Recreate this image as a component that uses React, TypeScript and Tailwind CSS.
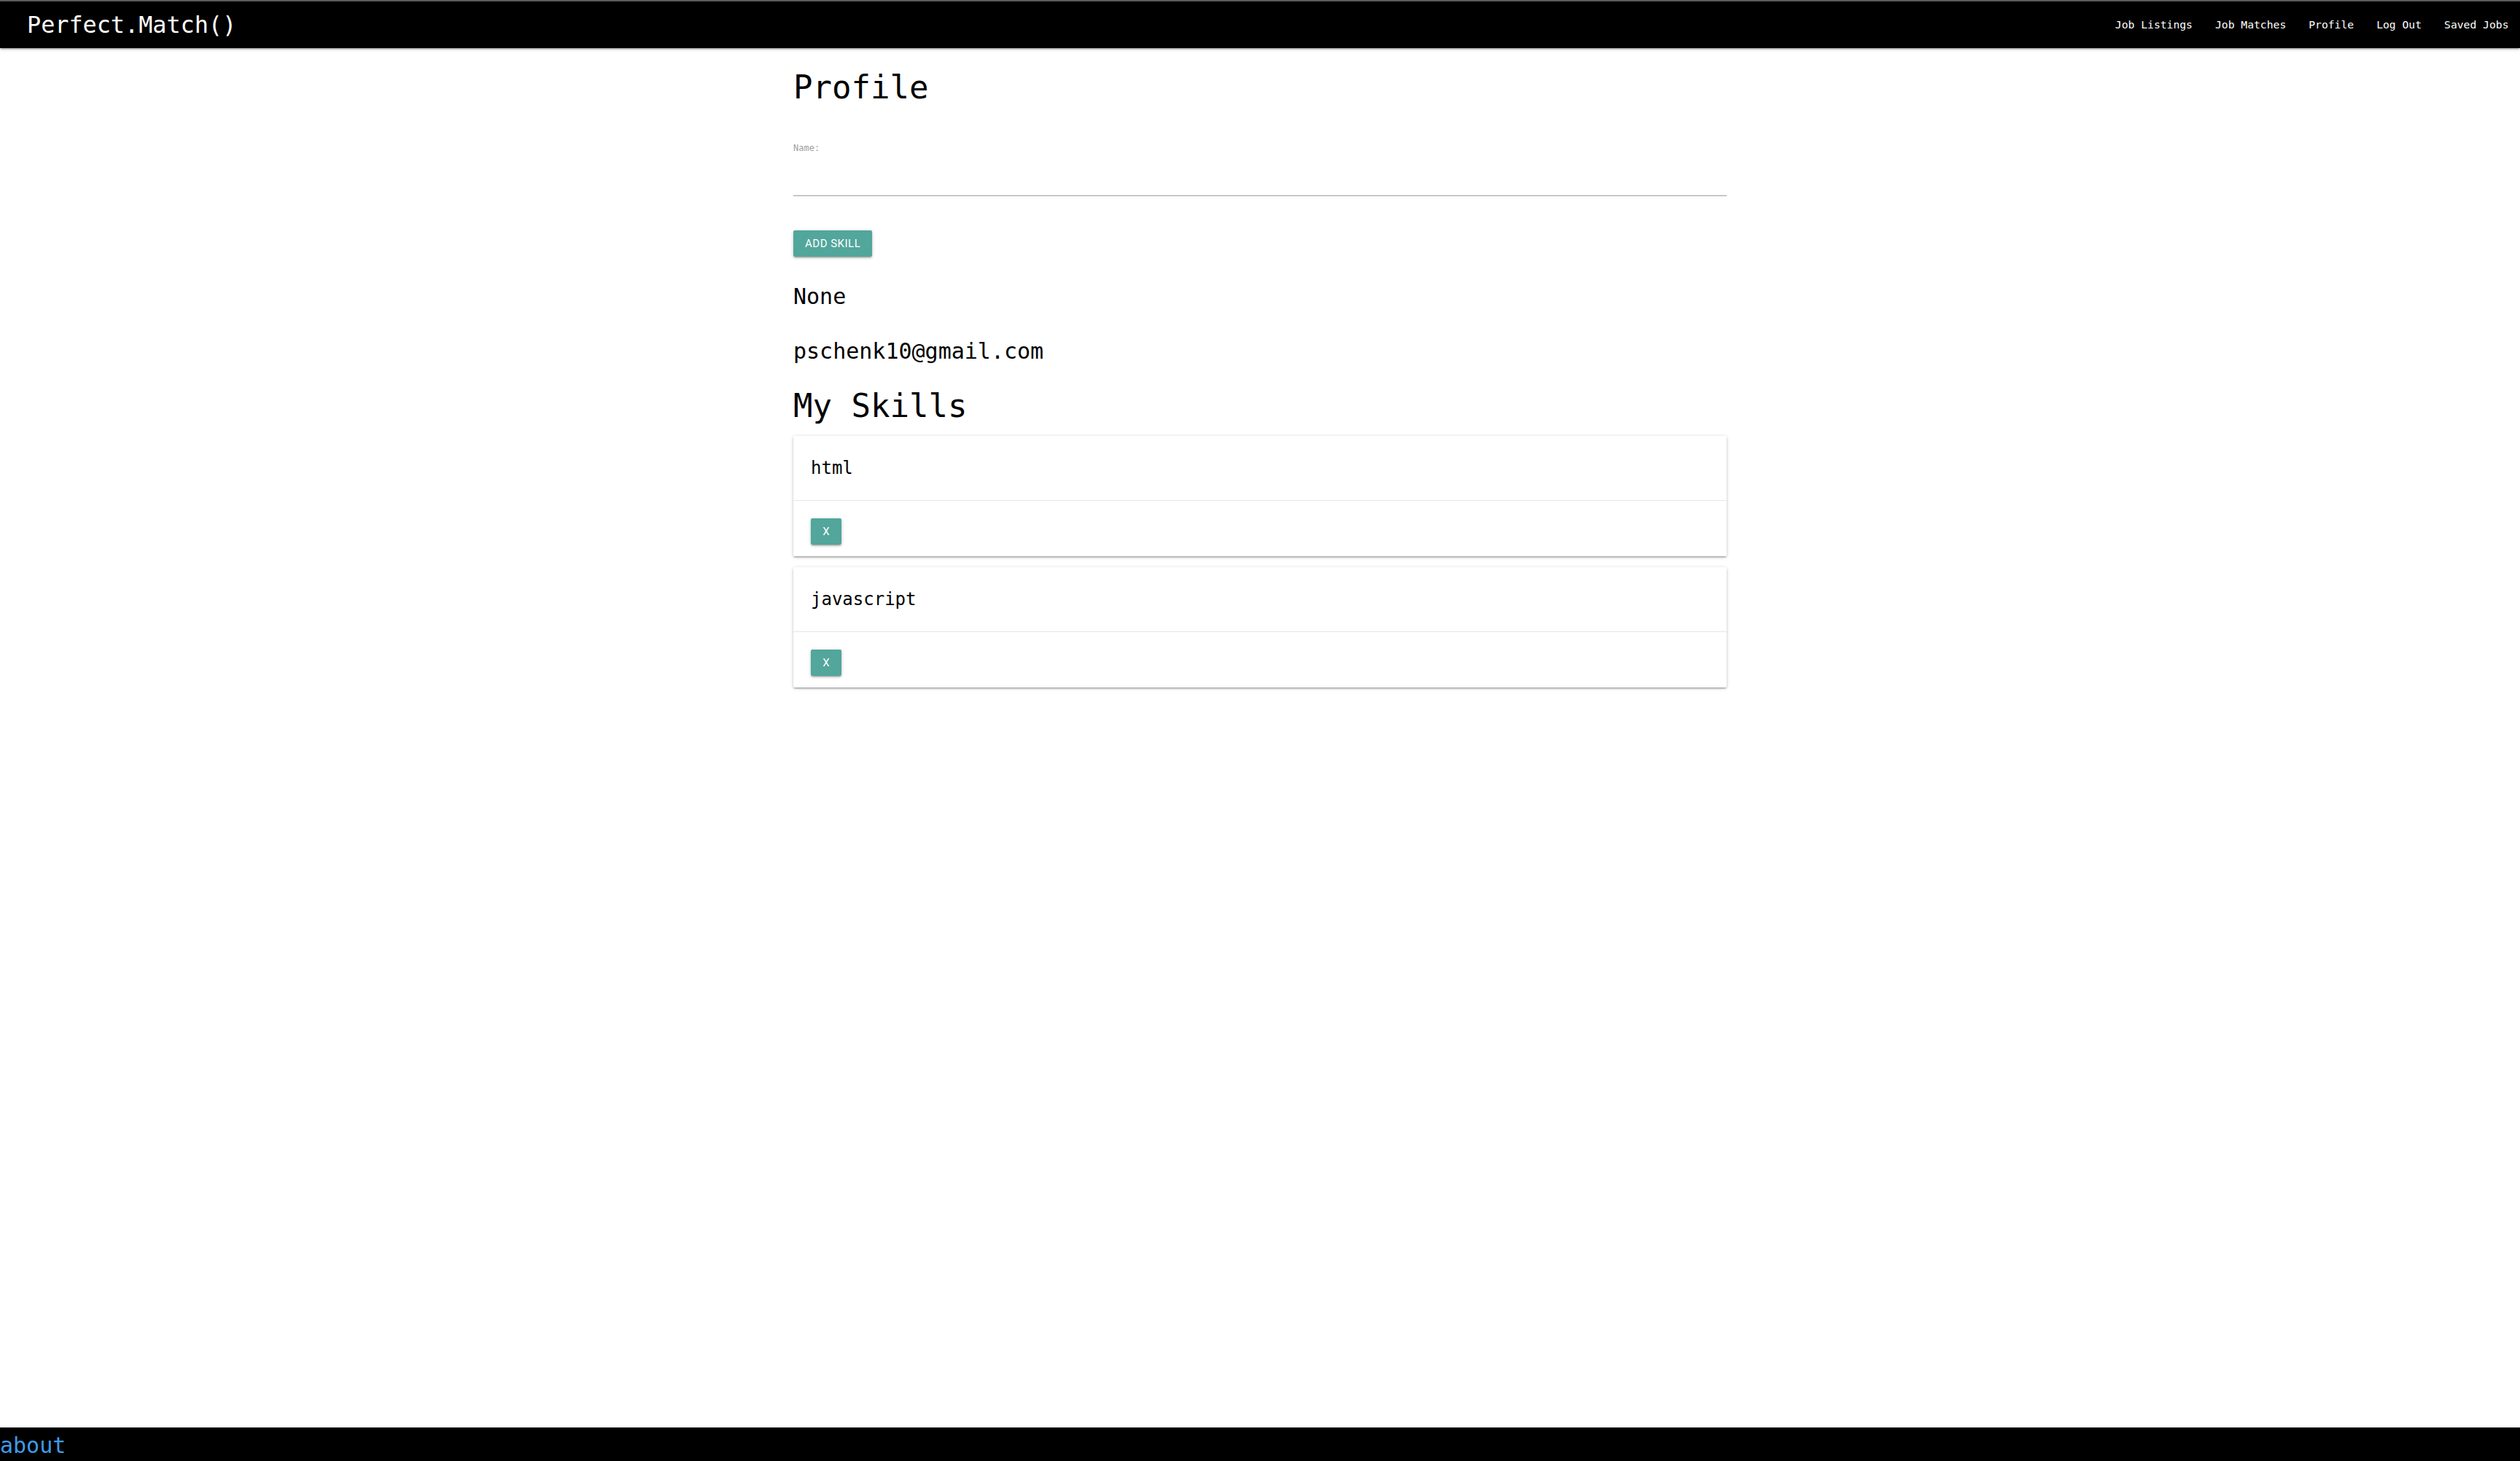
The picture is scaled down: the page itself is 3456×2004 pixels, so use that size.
import { useState } from "react"

const mono = "font-['DejaVu_Sans_Mono','Liberation_Mono',monospace]"
const sans = "font-['Roboto','Liberation_Sans',sans-serif]"
const shadow = "shadow-[0_2px_2px_0_rgba(0,0,0,0.14),0_3px_1px_-2px_rgba(0,0,0,0.12),0_1px_5px_0_rgba(0,0,0,0.2)]"

const links = ["Job Listings", "Job Matches", "Profile", "Log Out", "Saved Jobs"]

export default function App() {

  const [name, setName] = useState("")
  const [skills, setSkills] = useState(["html", "javascript"])

  const removeSkill = (i:number) => {
    const next=[...skills]
    next.splice(i,1)
    setSkills(next)
  }

  return(

    <div className={`min-h-screen flex flex-col bg-white text-black ${mono}`}>

      <nav className={`h-[66px] bg-black border-t-2 border-[#5b5b5b] flex items-center justify-between relative z-10 ${shadow}`}>
        <a className="pl-[37px] text-white text-[31.8px] leading-none">
          Perfect.Match()
        </a>
        <ul className="flex">
          {links.map((l)=>(
            <li key={l}>
              <a className="px-[15.5px] text-white text-[14.7px]">{l}</a>
            </li>
          ))}
        </ul>
      </nav>

      <main className="flex-1">
        <div className="w-[1280px] mx-auto">

          <h1 className="mt-[30px] text-[44px] leading-[47px]">Profile</h1>

          <div className="mt-[52px]">
            <label className="block text-[12px] leading-[16px] text-[#9e9e9e]">Name:</label>
            <input
              className="block w-full h-[58px] border-b border-[#9e9e9e] outline-none text-[24px]"
              value={name}
              onChange={(e)=>setName(e.target.value)}
            />
          </div>

          <button className={`mt-[47px] h-[36px] px-[16px] rounded-[2px] bg-[#52a69b] text-white text-[15px] tracking-[0.5px] uppercase ${sans} ${shadow}`}>
            Add Skill
          </button>

          <p className="mt-[37px] text-[30px] leading-[36px]">None</p>

          <p className="mt-[39px] text-[30px] leading-[36px]">pschenk10@gmail.com</p>

          <h2 className="mt-[33px] text-[44px] leading-[48px]">My Skills</h2>

          <div className="mt-[17px] flex flex-col gap-[15px]">
            {skills.map((s,i)=>(
              <div key={s} className={`bg-white rounded-[2px] ${shadow}`}>
                <div className="p-[24px] text-[24px] leading-[40px]">{s}</div>
                <div className="border-t border-[#e6e6e6] px-[24px] pt-[24px] pb-[16px]">
                  <button
                    onClick={()=>removeSkill(i)}
                    className={`h-[36px] w-[42px] rounded-[2px] bg-[#52a69b] text-white text-[15px] ${sans} ${shadow}`}
                  >
                    X
                  </button>
                </div>
              </div>
            ))}
          </div>

        </div>
      </main>

      <footer className="h-[46px] bg-black pt-[4px]">
        <a className="text-[#3f9ae6] text-[30px] leading-[42px]">about</a>
      </footer>

    </div>

  )
}
